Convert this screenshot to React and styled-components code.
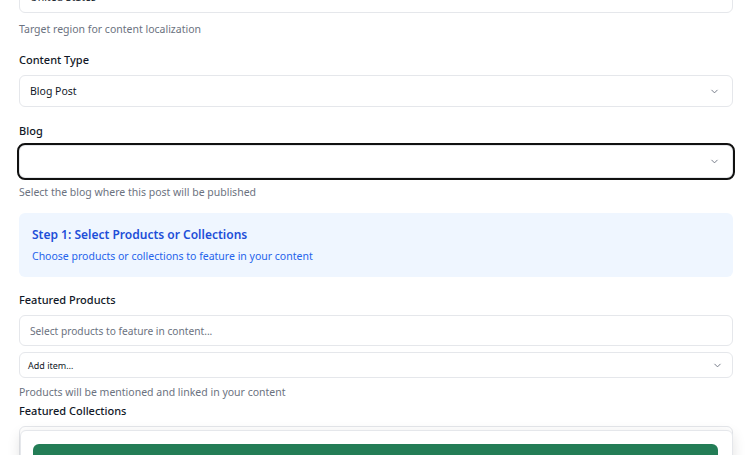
import React from "react";
import styled, { createGlobalStyle } from "styled-components";
import { ChevronDown } from "lucide-react";

const GlobalStyle = createGlobalStyle`
  body {
    margin: 0;
    background: #fff;
    font-family: "Noto Sans", "Open Sans", sans-serif;
    overflow: hidden;
  }
`;

const Page = styled.div`
  padding: 0 16px 80px 19px;
  margin-top: -19px;
  display: flex;
  flex-direction: column;
`;

const Field = styled.div`
  display: flex;
  flex-direction: column;
  margin-bottom: ${(p) => p.$after ?? 16}px;
`;

const Label = styled.label`
  font-size: 11px;
  line-height: 16px;
  font-weight: 500;
  color: #111827;
  margin-bottom: ${(p) => p.$gap ?? 7}px;
`;

const Help = styled.p`
  margin: ${(p) => p.$top ?? 8}px 0 0;
  font-size: 10.5px;
  line-height: 16px;
  color: #6b7280;
`;

const SelectBox = styled.div`
  box-sizing: border-box;
  height: ${(p) => p.$h ?? 32}px;
  display: flex;
  align-items: center;
  justify-content: space-between;
  padding: 0 ${(p) => p.$pr ?? 12}px 0 ${(p) => p.$pl ?? 10}px;
  border: 1px solid #e5e7eb;
  border-radius: 6px;
  background: #fff;
  font-size: ${(p) => p.$fs ?? 10.5}px;
  color: #111827;
  outline: ${(p) => (p.$focus ? "2px solid #111" : "none")};
  svg {
    color: #6b7280;
    flex-shrink: 0;
  }
`;

const Input = styled.div`
  box-sizing: border-box;
  height: 31px;
  display: flex;
  align-items: center;
  padding: 0 10px;
  border: 1px solid #e5e7eb;
  border-radius: 6px;
  font-size: 10.2px;
  color: #6b7280;
  margin-bottom: 6px;
`;

const StepCard = styled.div`
  background: #eff6ff;
  border-radius: 6px;
  padding: 13px 13px 13px;
  margin-bottom: 15px;
`;

const StepTitle = styled.h3`
  margin: 0 0 4px;
  font-size: 12px;
  line-height: 18px;
  font-weight: 600;
  color: #1d4ed8;
`;

const StepText = styled.p`
  margin: 0;
  font-size: 10.5px;
  line-height: 16px;
  color: #2563eb;
`;

const CollectionBox = styled.div`
  height: 40px;
  border: 1px solid #e5e7eb;
  border-radius: 6px;
`;

const Footer = styled.div`
  position: fixed;
  top: 430px;
  left: 20px;
  right: 16px;
  box-sizing: border-box;
  padding: 13px 14px 13px 12px;
  background: #fff;
  border: 1px solid #e5e7eb;
  border-radius: 6px;
  box-shadow: 0 4px 14px rgba(0, 0, 0, 0.12);
`;

const PrimaryButton = styled.button`
  width: 100%;
  height: 36px;
  padding: 7px 0 0;
  display: flex;
  justify-content: center;
  align-items: flex-start;
  border: none;
  border-radius: 6px;
  background: #237d56;
  color: #fff;
  font-family: inherit;
  font-size: 12.5px;
  line-height: 18px;
  font-weight: 600;
`;

export default function App() {
  return (
    <>
      <GlobalStyle />
      <Page>
        <Field $after={15}>
          <SelectBox>
            <span>United States</span>
            <ChevronDown size={11} />
          </SelectBox>
          <Help>Target region for content localization</Help>
        </Field>

        <Field>
          <Label>Content Type</Label>
          <SelectBox>
            <span>Blog Post</span>
            <ChevronDown size={11} />
          </SelectBox>
        </Field>

        <Field $after={13}>
          <Label $gap={6}>Blog</Label>
          <SelectBox $focus $h={33}>
            <span />
            <ChevronDown size={11} />
          </SelectBox>
          <Help $top={6}>Select the blog where this post will be published</Help>
        </Field>

        <StepCard>
          <StepTitle>Step 1: Select Products or Collections</StepTitle>
          <StepText>Choose products or collections to feature in your content</StepText>
        </StepCard>

        <Field $after={3}>
          <Label>Featured Products</Label>
          <Input>Select products to feature in content...</Input>
          <SelectBox $h={26} $fs={9} $pl={8} $pr={9}>
            <span>Add item…</span>
            <ChevronDown size={11} />
          </SelectBox>
          <Help $top={6}>Products will be mentioned and linked in your content</Help>
        </Field>

        <Field>
          <Label>Featured Collections</Label>
          <CollectionBox />
        </Field>
      </Page>
      <Footer>
        <PrimaryButton>Next: Generate</PrimaryButton>
      </Footer>
    </>
  );
}
